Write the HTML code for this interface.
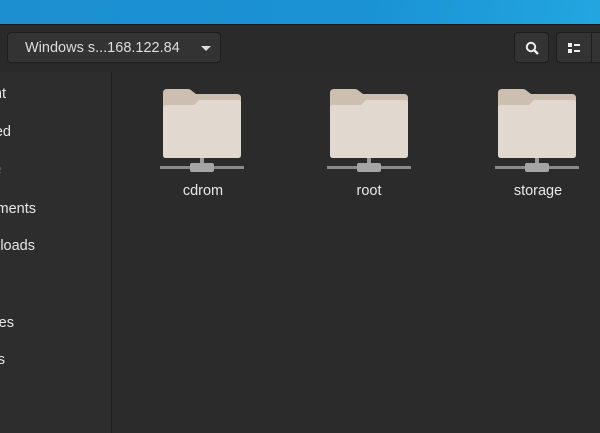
<!DOCTYPE html>
<html><head><style>
body{margin:0;width:600px;height:433px;overflow:hidden;background:#2d2d2d;font-family:"Liberation Sans","DejaVu Sans",sans-serif;position:relative}
.top{position:absolute;left:0;top:0;width:600px;height:24px;background:linear-gradient(100deg,#1c8fd0 0%,#1a92d4 60%,#22a6e0 100%)}
.hb{position:absolute;left:0;top:24px;width:600px;height:47px;background:#2a2a2a;border-top:1px solid #1b1b1b;border-bottom:1px solid #151515;overflow:hidden}
.btn{position:absolute;top:7px;height:31px;background:#333;border:1px solid #1e1e1e;border-radius:4px;box-sizing:border-box}
.side{position:absolute;left:0;top:72px;width:111px;height:361px;background:#2d2d2d;border-right:1px solid #1e1e1e;overflow:hidden}
.side div{position:absolute;color:#e6e6e6;font-size:14.5px;width:100px;text-align:right;white-space:nowrap}
.main{position:absolute;left:112px;top:72px;width:488px;height:361px;background:#2b2b2b}
.lbl{position:absolute;top:183px;color:#e8e8e8;font-size:14.5px;width:120px;text-align:center}
</style></head><body>
<div class="top"></div>
<div class="hb">
 <div class="btn" style="left:7px;width:214px"><span style="position:absolute;left:17px;top:7px;color:#ddd;font-size:14.5px">Windows s...168.122.84</span>
 <div style="position:absolute;left:193px;top:13px;width:0;height:0;border-left:5px solid transparent;border-right:5px solid transparent;border-top:5px solid #ddd"></div></div>
 <div class="btn" style="left:514px;width:35px"><svg width="35" height="31" style="position:absolute;left:0;top:0"><circle cx="16" cy="14" r="4.2" fill="none" stroke="#eee" stroke-width="2"/><line x1="19" y1="17" x2="23" y2="21" stroke="#eee" stroke-width="2.4"/></svg></div>
 <div class="btn" style="left:556px;width:60px"><svg width="34" height="31" style="position:absolute;left:0;top:0"><rect x="11" y="10" width="4" height="4" fill="#eee"/><rect x="11" y="16" width="4" height="4" fill="#eee"/><rect x="17" y="11" width="6" height="2" fill="#eee"/><rect x="17" y="17" width="6" height="2" fill="#eee"/></svg><div style="position:absolute;left:34px;top:0;width:1px;height:29px;background:#1e1e1e"></div></div>
</div>
<div class="side">
 <div style="left:-94px;top:14px">Recent</div>
 <div style="left:-89px;top:52px">Starred</div>
 <div style="left:-98px;top:90px;color:#555">Home</div>
 <div style="left:-64px;top:129px">Documents</div>
 <div style="left:-65px;top:166px">Downloads</div>
 <div style="left:-86px;top:243px">Pictures</div>
 <div style="left:-95px;top:280px">Videos</div>
</div>
<div class="main"></div>
<svg width="600" height="433" style="position:absolute;left:0;top:0">
<defs><g id="fo">
<path d="M4 0 H25 Q27 0 29 2 L33 5 H74 Q78 5 78 9 V30 H0 V4 Q0 0 4 0Z" fill="#cdbfb0"/>
<path d="M3 16 H31 L36 11 H75 Q78 11 78 14 V66 Q78 69 75 69 H3 Q0 69 0 66 V19 Q0 16 3 16Z" fill="#e1d9d0"/>
<rect x="37" y="69" width="4" height="8" fill="#9a9a9a"/>
<rect x="-3" y="77" width="84" height="3" fill="#8a8a8a"/>
<rect x="27" y="74" width="24" height="9" rx="2" fill="#a5a5a5"/>
</g></defs>
<use href="#fo" x="163" y="89"/>
<use href="#fo" x="330" y="89"/>
<use href="#fo" x="498" y="89"/>
</svg>
<div class="lbl" style="left:143px">cdrom</div>
<div class="lbl" style="left:309px">root</div>
<div class="lbl" style="left:478px">storage</div>
</body></html>
